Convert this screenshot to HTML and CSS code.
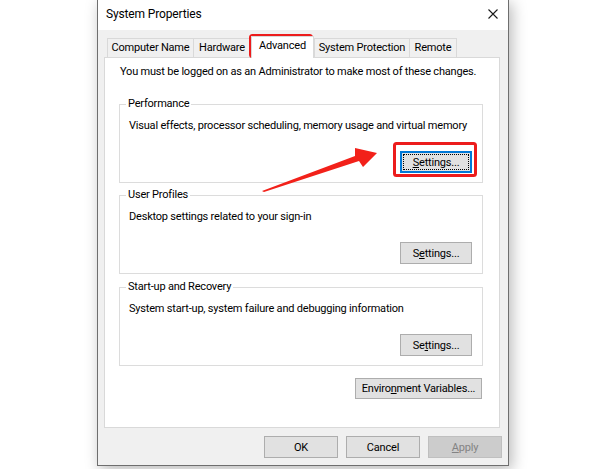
FILE: index.html
```html
<!DOCTYPE html>
<html>
<head>
	<meta charset="utf-8">
	<title>System Properties</title>
	<link rel="stylesheet" href="styles.css">
</head>
<body>
<div class="stage">
	<div class="dialog">
		<div class="titlebar">
			<span class="title">System Properties</span>
			<svg class="close" width="10" height="10" viewBox="0 0 10 10">
				<path d="M0.5 0.5 L9.5 9.5 M9.5 0.5 L0.5 9.5" stroke="#1a1a1a" stroke-width="1.1" fill="none"/>
			</svg>
		</div>
		<div class="client">
			<div class="tabs">
				<div class="tab tab-cn">Computer Name</div>
				<div class="tab tab-hw">Hardware</div>
				<div class="tab tab-adv active">Advanced</div>
				<div class="tab tab-sp">System Protection</div>
				<div class="tab tab-rm">Remote</div>
			</div>
			<div class="panel">
				<p class="note">You must be logged on as an Administrator to make most of these changes.</p>

				<fieldset class="group first">
					<legend>Performance</legend>
					<p class="desc">Visual effects, processor scheduling, memory usage and virtual memory</p>
					<div class="row"><button class="btn focused"><span class="focus-ring"><u>S</u>ettings...</span></button></div>
				</fieldset>

				<fieldset class="group">
					<legend>User Profiles</legend>
					<p class="desc">Desktop settings related to your sign-in</p>
					<div class="row"><button class="btn">S<u>e</u>ttings...</button></div>
				</fieldset>

				<fieldset class="group">
					<legend>Start-up and Recovery</legend>
					<p class="desc">System start-up, system failure and debugging information</p>
					<div class="row"><button class="btn">Se<u>t</u>tings...</button></div>
				</fieldset>

				<div class="env-row"><button class="btn env">Enviro<u>n</u>ment Variables...</button></div>
			</div>
			<div class="actions">
				<button class="btn action">OK</button>
				<button class="btn action">Cancel</button>
				<button class="btn action" disabled><u>A</u>pply</button>
			</div>
		</div>
	</div>

	<!-- red annotation marks -->
	<svg class="marks" width="600" height="469" viewBox="0 0 600 469">
		<rect x="250.5" y="35.5" width="61" height="21" rx="2" fill="none" stroke="#ec1c1c" stroke-width="3"/>
		<rect x="394.5" y="143.5" width="81" height="32" rx="2" fill="none" stroke="#ec1c1c" stroke-width="3"/>
		<polygon points="262,191 355,156 355,148 377,153 363,167 359,161 264,192" fill="#f2211a"/>
	</svg>
</div>
</body>
</html>
```

FILE: styles.css
```css
*
{
	box-sizing: border-box;
}
body
{
	margin: 0;
	background-color: #ffffff;
	font-family: Roboto, "Liberation Sans", sans-serif;
	font-size: 11px;
	letter-spacing: -0.2px;
	color: #000000;
	white-space: nowrap;
}
.stage
{
	position: relative;
	width: 600px;
	height: 469px;
	overflow: hidden;
}
.dialog
{
	width: 412px;
	height: 467px;
	margin: -1px 0 0 97px;
	border: solid 1px #6e6e6e;
	background-color: #f0f0f0;
	box-shadow: 3px 4px 14px rgba(0, 0, 0, 0.28);
	display: flex;
	flex-direction: column;
}
.titlebar
{
	height: 30px;
	flex: none;
	background-color: #ffffff;
	display: flex;
	align-items: center;
	justify-content: space-between;
	padding: 0 10px 2px 8px;
}
.title
{
	font-size: 12px;
	letter-spacing: -0.15px;
	line-height: 15px;
}
.client
{
	flex: 1;
	padding: 6px 8px 7px 6px;
}

/* tabs */
.tabs
{
	display: flex;
	align-items: flex-end;
	height: 21px;
	padding-left: 3px;
}
.tab
{
	height: 19px;
	line-height: 17px;
	text-align: center;
	border: solid 1px #d9d9d9;
	border-bottom: none;
	background-color: #f0f0f0;
}
.tab-cn { width: 87px; }
.tab-hw { width: 57px; border-left: none; }
.tab-adv { width: 63px; }
.tab-sp { width: 96px; }
.tab-rm { width: 47px; border-left: none; }
.tab.active
{
	position: relative;
	z-index: 1;
	height: 22px;
	line-height: 18px;
	margin-bottom: -1px;
	background-color: #ffffff;
}

/* page */
.panel
{
	width: 396px;
	height: 371px;
	background-color: #ffffff;
	border: solid 1px #d9d9d9;
	padding: 6px 16px 0 14px;
}
.note
{
	margin: 0 0 0 1px;
	line-height: 16px;
}
.group
{
	margin: 5px 0 0 0;
	padding: 7px 10px 9px 9px;
	border: solid 1px #dcdcdc;
	min-width: 0;
}
.group.first
{
	margin-top: 17px;
}
.group + .group + .group
{
	margin-top: 6px;
}
.group legend
{
	margin-left: -3px;
	padding: 0 2px;
	line-height: 14px;
}
.desc
{
	margin: 0;
	line-height: 15px;
}
.row
{
	display: flex;
	justify-content: flex-end;
	margin-top: 18px;
}
.env-row
{
	display: flex;
	justify-content: flex-end;
	margin-top: 12px;
	padding-right: 1px;
}

/* buttons */
.btn
{
	font-family: inherit;
	font-size: 11px;
	letter-spacing: -0.2px;
	color: #000000;
	height: 22px;
	padding: 0;
	background-color: #e1e1e1;
	border: solid 1px #adadad;
	border-radius: 0;
	white-space: nowrap;
}
.group .btn
{
	width: 72px;
}
.btn.focused
{
	border: solid 2px #0078d7;
	display: flex;
	padding: 1px;
}
.focus-ring
{
	flex: 1;
	display: flex;
	align-items: center;
	justify-content: center;
	border: dotted 1px #000000;
}
.env
{
	width: 127px;
	height: 21px;
}
.actions
{
	display: flex;
	justify-content: flex-end;
	gap: 8px;
	margin-top: 8px;
	margin-right: -2px;
}
.action
{
	width: 74px;
}
.action:disabled
{
	background-color: #cccccc;
	border-color: #bfbfbf;
	color: #838383;
}

/* annotation overlay */
.marks
{
	position: absolute;
	left: 0;
	top: 0;
	pointer-events: none;
}
```
